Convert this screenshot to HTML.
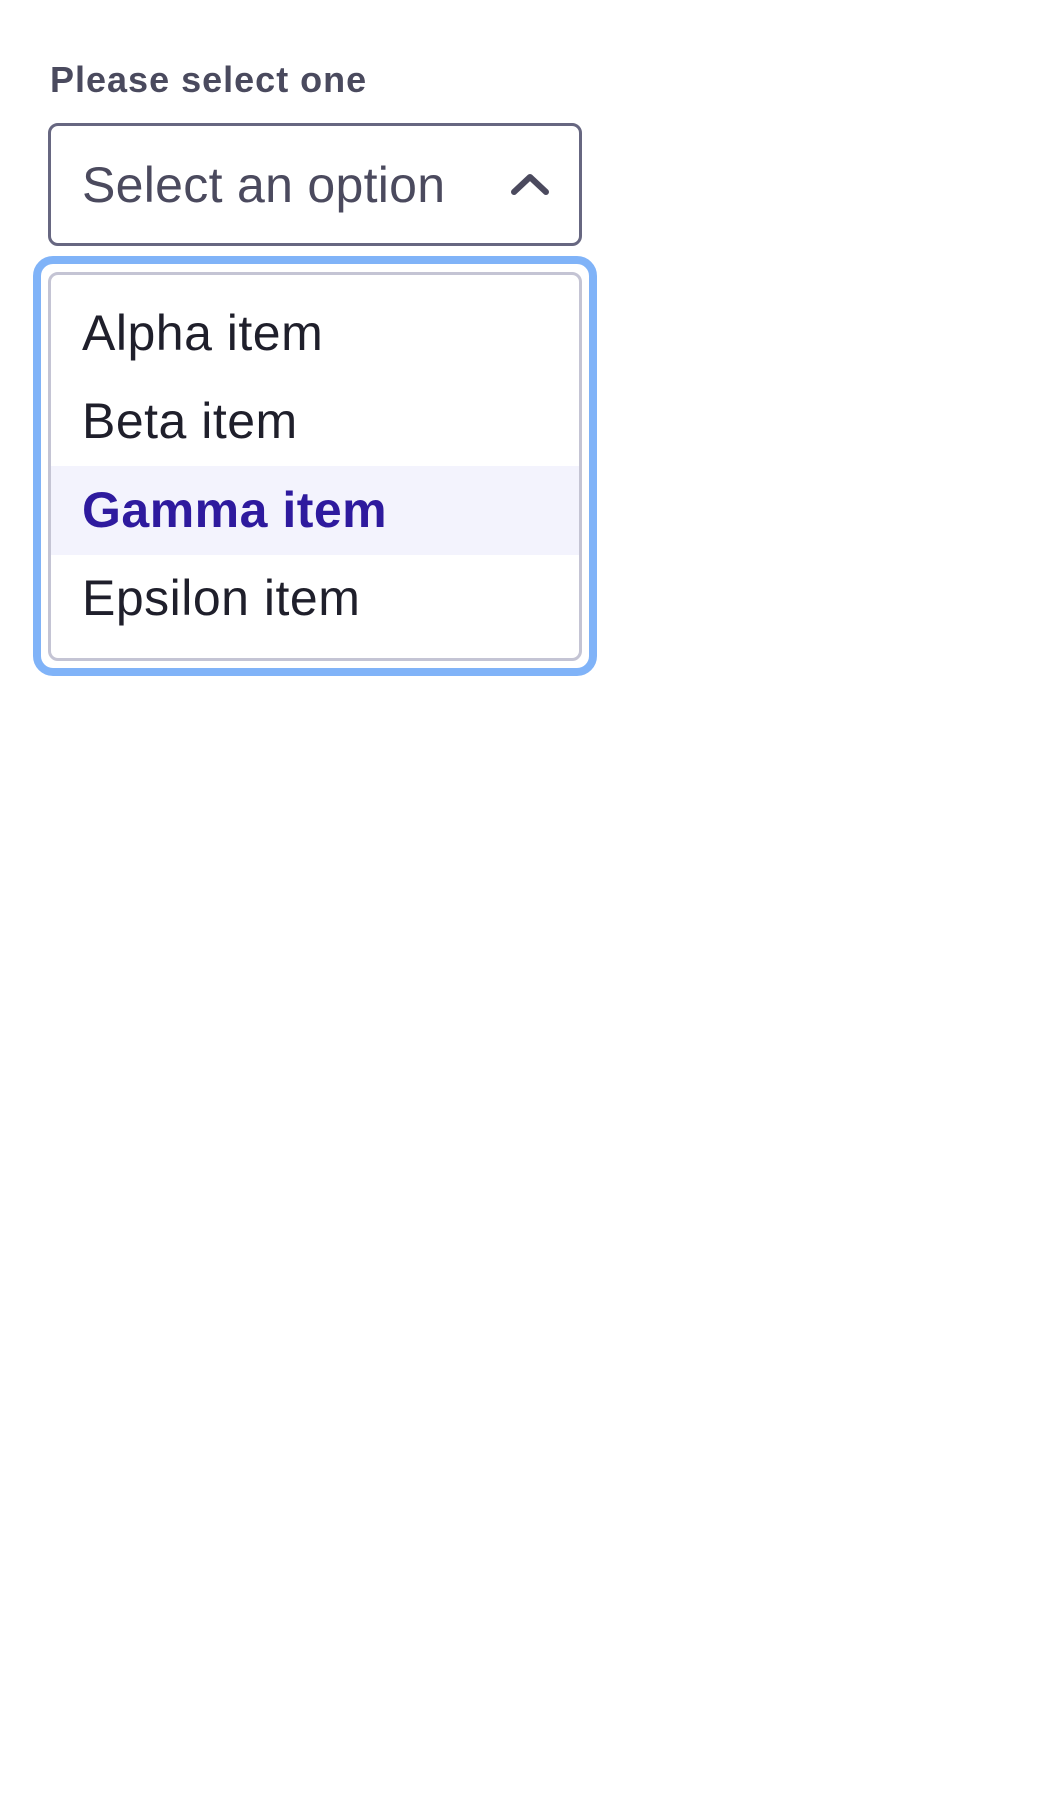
<!DOCTYPE html>
<html><head><meta charset="utf-8"><style>
html,body{margin:0;padding:0;background:#fff;width:1050px;height:1800px;overflow:hidden}
body{font-family:"Liberation Sans",sans-serif;position:relative}
.label{position:absolute;left:50px;top:62px;font-weight:bold;font-size:36px;color:#4a4a5e;line-height:1;white-space:nowrap;letter-spacing:1px}
.box{position:absolute;left:48px;top:123px;width:534px;height:123px;box-sizing:border-box;border:3px solid #676781;border-radius:10px}
.sel{position:absolute;left:82px;top:160px;font-size:50px;color:#4b4a5e;line-height:1;white-space:nowrap;letter-spacing:0.3px}
.ring{position:absolute;left:33px;top:256px;width:564px;height:420px;box-sizing:border-box;border:8px solid #80b3f8;border-radius:20px}
.list{position:absolute;left:48px;top:272px;width:534px;height:389px;box-sizing:border-box;border:3px solid #c4c4d4;border-radius:10px;overflow:hidden}
.item{position:absolute;left:0;width:100%;height:89px}
.item span{position:absolute;left:31px;font-size:50px;line-height:1;color:#1f1f2b;white-space:nowrap;letter-spacing:0.5px}
.hl{background:#f3f3fd}
.hl span{color:#2e1a9e;font-weight:bold}
</style></head><body>
<div class="label">Please select one</div>
<div class="box"></div>
<div class="sel">Select an option</div>
<svg style="position:absolute;left:505px;top:165px" width="50" height="40" viewBox="0 0 50 40"><path d="M9 27 L25 12 L41 27" fill="none" stroke="#4b4a5e" stroke-width="6" stroke-linecap="round" stroke-linejoin="round"/></svg>
<div class="ring"></div>
<div class="list">
<div class="item" style="top:13px"><span style="top:20px">Alpha item</span></div>
<div class="item" style="top:102px"><span style="top:19px">Beta item</span></div>
<div class="item hl" style="top:191px"><span style="top:19px">Gamma item</span></div>
<div class="item" style="top:280px"><span style="top:18px">Epsilon item</span></div>
</div>
</body></html>
